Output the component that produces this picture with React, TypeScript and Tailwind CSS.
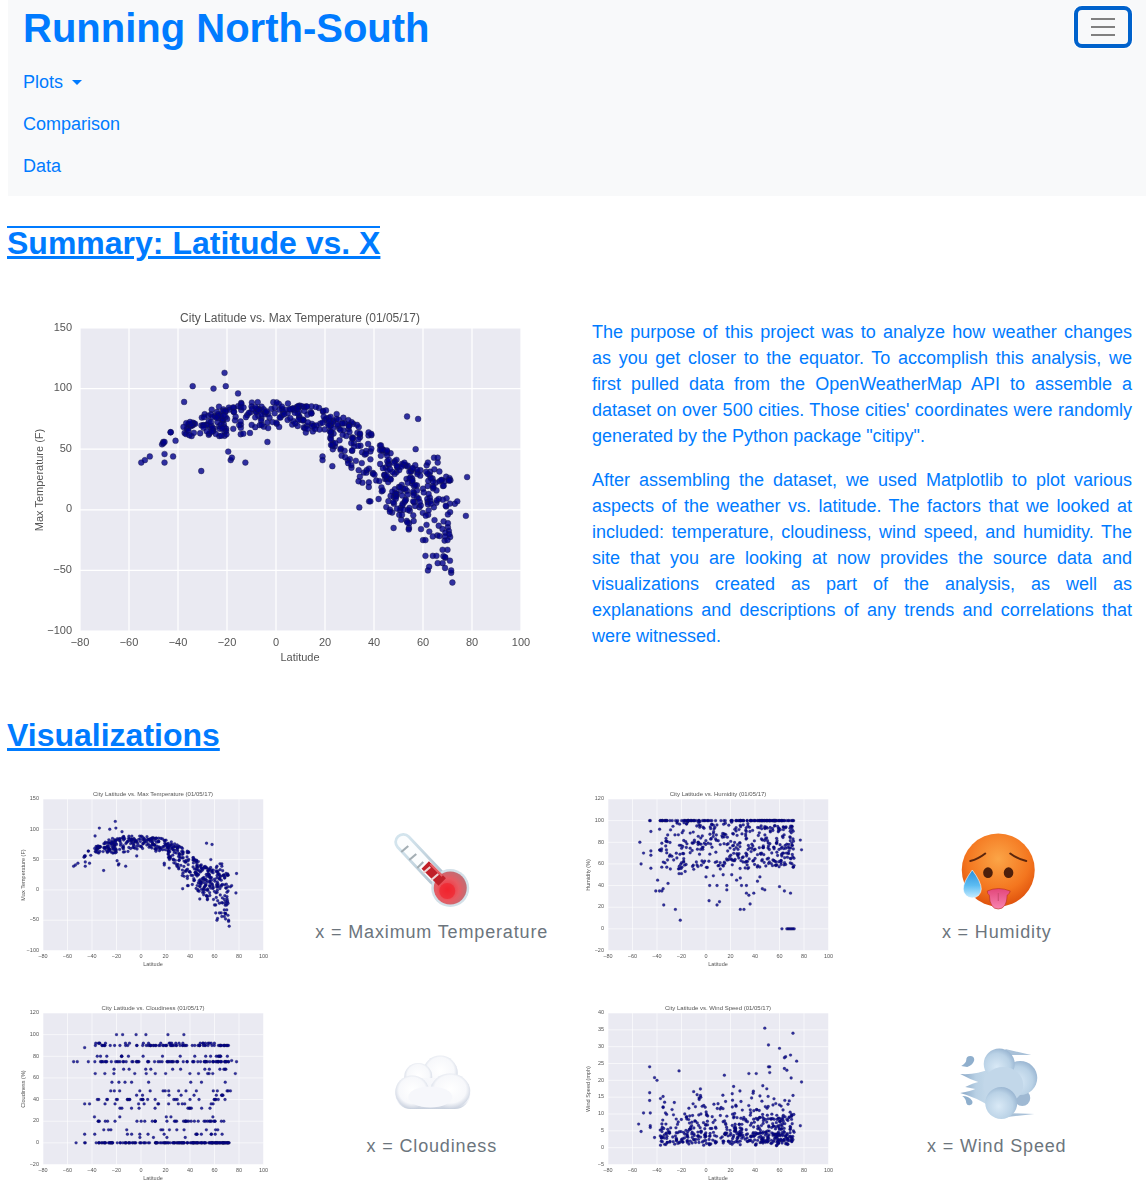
import React from "react";

type Pt = [number, number];

// small seeded rng so the scatter stays the same on each render
function rng(seed: number) {
  let a = seed;
  return () => {
    a |= 0;
    a = (a + 0x6d2b79f5) | 0;
    let t = Math.imul(a ^ (a >>> 15), 1 | a);
    t = (t + Math.imul(t ^ (t >>> 7), 61 | t)) ^ t;
    return ((t ^ (t >>> 14)) >>> 0) / 4294967296;
  };
}

function lerp(table: Pt[], x: number) {
  for (let i = 0; i < table.length - 1; i++) {
    if (x <= table[i + 1][0]) {
      const f = (x - table[i][0]) / (table[i + 1][0] - table[i][0]);
      return table[i][1] + f * (table[i + 1][1] - table[i][1]);
    }
  }
  return table[table.length - 1][1];
}

function lats(r: () => number) {
  const out: number[] = [];
  const spans: [number, number, number][] = [
    [-38, -10, 105],
    [-10, 20, 110],
    [20, 45, 125],
    [45, 72, 185],
  ];
  spans.forEach(([a, b, n]) => {
    for (let i = 0; i < n; i++) out.push(a + r() * (b - a));
  });
  return out;
}

function tempData(): Pt[] {
  const r = rng(11);
  const lo: Pt[] = [[-40, 55], [-25, 60], [-10, 62], [5, 68], [20, 58], [30, 30], [40, 12], [50, -12], [60, -28], [72, -48]];
  const hi: Pt[] = [[-40, 70], [-25, 85], [-10, 90], [5, 88], [20, 84], [30, 74], [40, 62], [50, 40], [60, 38], [72, 28]];
  const pts: Pt[] = lats(r).map((la) => {
    const t = Math.pow(r(), 0.72);
    const a = lerp(lo, la);
    return [la, a + (lerp(hi, la) - a) * t];
  });
  const extra: Pt[] = [[-55, 39], [-53.5, 41], [-51.5, 44], [-46.5, 54], [-46, 56], [-46, 55], [-45.5, 56], [-45.5, 46], [-45.5, 39], [-43, 64], [-43, 64], [-42, 44], [-41, 57], [-37.5, 89], [-34, 102], [-30.5, 32], [-25.5, 100], [-21, 113], [-20.5, 102], [-19.5, 48], [-18.5, 41], [-18, 43], [-15.5, 96], [-12.5, 39], [-3.5, 56], [19, 44], [19, 41], [23, 36], [34, 2], [38, 7], [38.5, 7], [48, -15], [53.5, 77], [58, 75], [57, 50], [77.5, -5], [78, 27], [73, 5], [74, 7], [72, -60], [71.5, -52], [71.5, -50], [70, -33], [68, -33], [62, -50], [62.5, -47], [61, -38], [64, -38], [65.5, -38], [66, -44], [68, -44], [69, -48], [69, -39], [71, -42], [62, 39], [64.5, 43], [66, 43], [66, 39], [70, -25], [69, -22], [64, -22], [60, -25], [61, -25]];
  return pts.concat(extra);
}

function humidData(): Pt[] {
  const r = rng(23);
  const pts: Pt[] = [];
  lats(r).forEach((la) => {
    const v = r();
    if (v < 0.24) pts.push([la, 100]);
    else if (la > 40) pts.push([la, 96 - r() * 40]);
    else pts.push([la, 99 - r() * 44]);
  });
  const extra: Pt[] = [[-54, 80], [-53, 60], [-51, 70], [-46, 100], [-45.5, 100], [-45, 90], [-45, 56], [-45, 68], [-45, 72], [-39.5, 45], [-41, 35], [-38, 35], [-36, 35], [-35, 37], [-34.5, 22], [-31, 42], [-25, 18], [-21, 8], [-22, 51], [-20, 51], [-17, 53], [-10, 55], [0, 48], [3, 40], [2.5, 26], [6, 49], [9, 40], [9, 22], [11, 25], [14, 50], [17, 40], [17, 36], [21, 50], [25, 45], [28, 47], [28, 18], [31, 18], [29, 40], [33, 40], [33, 33], [35, 31], [36, 23], [39, 33], [42, 44], [44, 48], [46, 37], [48, 36], [60, 39], [64, 35], [69, 33], [62, 0], [66, 0], [67, 0], [68, 0], [69, 0], [70, 0], [71, 0], [72, 0], [78, 73], [77, 82]];
  return pts.concat(extra);
}

function cloudData(): Pt[] {
  const r = rng(37);
  const levels: [number, number][] = [[0, 0.3], [5, 0.012], [8, 0.03], [12, 0.02], [20, 0.055], [24, 0.015], [32, 0.025], [36, 0.025], [40, 0.05], [44, 0.015], [48, 0.03], [56, 0.025], [64, 0.025], [68, 0.02], [75, 0.14], [80, 0.03], [90, 0.16], [92, 0.03]];
  const pts: Pt[] = [];
  lats(r).forEach((la) => {
    let v = r();
    let lv = 0;
    for (const [l, w] of levels) {
      if (v < w) {
        lv = l;
        break;
      }
      v -= w;
    }
    pts.push([la, lv]);
  });
  const extra: Pt[] = [[-20, 100], [-15, 100], [-4, 100], [4, 100], [22, 100], [35, 100], [-53, 0], [-46, 0], [-45.5, 0], [-46, 8], [-46, 36], [-46, 88], [-55, 75], [-52, 75], [-43, 75], [-42, 36], [-38, 24], [78, 75], [77, 64], [73, 48], [74, 76], [-34, 92], [-29, 92]];
  return pts.concat(extra);
}

function windData(): Pt[] {
  const r = rng(53);
  const pts: Pt[] = lats(r).map((la) => {
    const e = -Math.log(1 - r() * 0.97) * 4.8;
    return [la, Math.min(0.5 + e + r() * 1.5, 19)];
  });
  const extra: Pt[] = [[48, 35.5], [71, 34], [51, 30.5], [60, 29.5], [69, 27.5], [65, 27], [64, 26.7], [74, 25.7], [-46, 24], [51, 24], [52, 24], [52, 22.3], [64, 23.5], [66, 23], [-22, 22.8], [35, 22], [41, 22], [15, 21.5], [-42, 20.8], [-40, 20], [69.5, 20.7], [78, 19.5], [77, 6.5], [-55, 7], [-53, 4.8], [-51, 10.3], [-45.5, 10.3], [-46, 16.3], [-46, 14], [-45.5, 6.5], [-45.5, 6], [-42, 3]];
  return pts.concat(extra);
}

const temp = tempData();
const humid = humidData();
const cloud = cloudData();
const wind = windData();

const xTicks = [-80, -60, -40, -20, 0, 20, 40, 60, 80, 100];

type ChartProps = {
  title: string;
  yLabel: string;
  yMin: number;
  yMax: number;
  yStep: number;
  data: Pt[];
  small?: boolean;
};

function fmt(n: number) {
  return n < 0 ? "\u2212" + Math.abs(n) : String(n);
}

function Chart({ title, yLabel, yMin, yMax, yStep, data, small }: ChartProps) {
  const L = 60;
  const R = 501;
  const T = 28;
  const B = 331;
  const px = (v: number) => L + ((v + 80) / 180) * (R - L);
  const py = (v: number) => B - ((v - yMin) / (yMax - yMin)) * (B - T);
  const yTicks: number[] = [];
  for (let v = yMin; v <= yMax; v += yStep) yTicks.push(v);

  return (
    <svg
      viewBox="0 0 520 370"
      className={small ? "block w-[260px] h-[185px] blur-[0.6px]" : "block w-[520px] h-[370px] blur-[0.4px]"}
    >
      <rect x={L} y={T} width={R - L} height={B - T} fill="#eaeaf2" />
      {xTicks.map((t) => (
        <line key={t} x1={px(t)} x2={px(t)} y1={T} y2={B} stroke="#fff" strokeWidth={1.2} />
      ))}
      {yTicks.map((t) => (
        <line key={t} x1={L} x2={R} y1={py(t)} y2={py(t)} stroke="#fff" strokeWidth={1.2} />
      ))}
      {data.map(([x, y], i) => (
        <circle key={i} cx={px(x)} cy={py(y)} r={2.9} fill="#00008b" fillOpacity={0.8} stroke="#1a1a40" strokeWidth={0.4} />
      ))}
      <g fill="#555555" fontSize={11} fontFamily="'Liberation Sans', sans-serif">
        {xTicks.map((t) => (
          <text key={t} x={px(t)} y={346} textAnchor="middle">
            {fmt(t)}
          </text>
        ))}
        {yTicks.map((t) => (
          <text key={t} x={52} y={py(t) + 2.5} textAnchor="end">
            {fmt(t)}
          </text>
        ))}
        <text x={280} y={361} textAnchor="middle">
          Latitude
        </text>
        <text transform="translate(23,180) rotate(-90)" textAnchor="middle">
          {yLabel}
        </text>
        <text x={280} y={22} textAnchor="middle" fontSize={12}>
          {title}
        </text>
      </g>
    </svg>
  );
}

function Thermometer() {
  return (
    <svg viewBox="1.75 0 120 96" className="block w-[120px] h-[96px] blur-[0.4px]">
      <defs>
        <radialGradient id="bulb" cx="0.42" cy="0.55" r="0.62">
          <stop offset="0" stopColor="#f02a34" />
          <stop offset="0.55" stopColor="#e85a62" />
          <stop offset="1" stopColor="#bb6f76" />
        </radialGradient>
        <linearGradient id="glass" x1="0" y1="0" x2="1" y2="1">
          <stop offset="0" stopColor="#d3e4ed" />
          <stop offset="1" stopColor="#b4c6d2" />
        </linearGradient>
      </defs>
      <line x1="33" y1="22" x2="66" y2="57" stroke="url(#glass)" strokeWidth="18" strokeLinecap="round" />
      <line x1="33" y1="22" x2="66" y2="57" stroke="#fbfdfe" strokeWidth="12.5" strokeLinecap="round" />
      <circle cx="80" cy="68" r="19" fill="#d3e0e8" />
      <circle cx="80" cy="68" r="16.5" fill="url(#bulb)" />
      <circle cx="77" cy="71" r="8" fill="#f2202a" opacity="0.6" />
      <line x1="55" y1="45" x2="72" y2="62" stroke="#c02028" strokeWidth="10.5" />
      <line x1="60" y1="44" x2="72" y2="56" stroke="#e66066" strokeWidth="2" />
      <g stroke="#a3aeb4" strokeWidth="2.2">
        <line x1="31" y1="32" x2="38" y2="26" />
        <line x1="39" y1="40" x2="46" y2="34" />
        <line x1="47" y1="48" x2="53" y2="42" />
        <line x1="53" y1="53" x2="60" y2="47" stroke="#eed3d3" />
        <line x1="61" y1="60" x2="68" y2="54" stroke="#eed3d3" />
      </g>
    </svg>
  );
}

function HotFace() {
  return (
    <svg viewBox="1.75 0 110 96" className="block w-[110px] h-[96px] blur-[0.3px]">
      <defs>
        <radialGradient id="face" cx="0.5" cy="0.35" r="0.72">
          <stop offset="0" stopColor="#fba547" />
          <stop offset="0.6" stopColor="#f4761f" />
          <stop offset="1" stopColor="#d84606" />
        </radialGradient>
        <linearGradient id="drop" x1="0" y1="0" x2="0" y2="1">
          <stop offset="0" stopColor="#2a8fdc" />
          <stop offset="0.55" stopColor="#5cbcf2" />
          <stop offset="1" stopColor="#c8ecff" />
        </linearGradient>
        <linearGradient id="tongue" x1="0" y1="0" x2="0" y2="1">
          <stop offset="0" stopColor="#e2467a" />
          <stop offset="1" stopColor="#f884b0" />
        </linearGradient>
      </defs>
      <circle cx="58" cy="50" r="36.5" fill="url(#face)" />
      <path d="M30 41 Q38 39 45 33.5" fill="none" stroke="#5b260d" strokeWidth="2" strokeLinecap="round" />
      <path d="M70 33.5 Q77 39 86 41" fill="none" stroke="#5b260d" strokeWidth="2" strokeLinecap="round" />
      <ellipse cx="47.7" cy="52.7" rx="4.8" ry="5.4" fill="#4d1f0b" />
      <ellipse cx="68.3" cy="52.7" rx="4.8" ry="5.4" fill="#4d1f0b" />
      <path d="M47 71 Q58 66 70 71 Q69.5 74 67 75 Q66.5 89 58 89 Q49.5 89 49 75 Q47 74 47 71Z" fill="url(#tongue)" stroke="#b92e1a" strokeWidth="0.6" />
      <path d="M58 73 L58 81" stroke="#c9486f" strokeWidth="1" />
      <path d="M32 50 Q23 62 23 69 A9 9 0 0 0 41 69 Q41 62 32 50Z" fill="url(#drop)" stroke="#ffffff" strokeWidth="0.6" />
    </svg>
  );
}

function Cloud() {
  return (
    <svg viewBox="-3.25 -6 110 96" className="block w-[110px] h-[96px] blur-[0.4px]">
      <defs>
        <radialGradient id="puff" cx="0.5" cy="0.45" r="0.55">
          <stop offset="0" stopColor="#ffffff" />
          <stop offset="0.72" stopColor="#f7f8fb" />
          <stop offset="1" stopColor="#cdd4e1" />
        </radialGradient>
        <linearGradient id="puffBase" x1="0" y1="0" x2="0" y2="1">
          <stop offset="0" stopColor="#f7f8fb" />
          <stop offset="0.75" stopColor="#f1f3f8" />
          <stop offset="1" stopColor="#c6cedc" />
        </linearGradient>
      </defs>
      <circle cx="60" cy="33" r="17.5" fill="url(#puff)" />
      <circle cx="38" cy="37" r="14" fill="url(#puff)" />
      <rect x="15" y="38" width="75" height="31" rx="15.5" fill="url(#puffBase)" />
      <ellipse cx="32" cy="52" rx="17" ry="16.5" fill="url(#puff)" />
      <ellipse cx="70" cy="51" rx="20" ry="17.5" fill="url(#puff)" />
      <ellipse cx="50" cy="57" rx="22" ry="10.5" fill="#f6f7fb" />
    </svg>
  );
}

function WindFace() {
  return (
    <svg viewBox="-3.25 -1 110 96" className="block w-[110px] h-[96px] blur-[0.5px]">
      <defs>
        <radialGradient id="gust" cx="0.42" cy="0.6" r="0.62">
          <stop offset="0" stopColor="#d9e9f6" />
          <stop offset="0.7" stopColor="#bad2e6" />
          <stop offset="1" stopColor="#9ab6d2" />
        </radialGradient>
        <linearGradient id="streak" x1="0" y1="0" x2="1" y2="0">
          <stop offset="0" stopColor="#86a4c4" />
          <stop offset="0.5" stopColor="#b8d0e4" />
          <stop offset="1" stopColor="#c7dbeb" />
        </linearGradient>
      </defs>
      <path d="M15 39 Q32 40 44 34 L46 72 Q30 62 15 58 Q26 56 30 54 L20 52 Q28 48 33 47 Q24 44 15 39Z" fill="url(#streak)" />
      <path d="M60 14 L86 20 L62 20Z M60 78 L89 79 L62 82Z" fill="#a9c1d8" />
      <circle cx="77" cy="63" r="8" fill="#9fb9d3" />
      <circle cx="75" cy="43" r="17" fill="url(#gust)" />
      <circle cx="54" cy="29" r="15.5" fill="url(#gust)" />
      <ellipse cx="58" cy="50" rx="20" ry="18" fill="#c2d7e9" />
      <circle cx="56" cy="68" r="16" fill="url(#gust)" />
      <path d="M22 32 Q28 30 29 25 A4 4 0 1 0 21 25 Q21 28 16 31Z" fill="#8fafcd" />
      <path d="M17 61 Q24 61 27 66 A3 3 0 1 1 21 68 Q21 64 17 61Z" fill="#8fafcd" />
    </svg>
  );
}

function Caption({ children }: { children: string }) {
  return <p className="mt-[3px] text-[18px] leading-[27px] tracking-[0.85px] text-[#6c757d]">{children}</p>;
}

function ChartCell(props: ChartProps) {
  return (
    <div className="pt-[5px] pl-[5px]">
      <Chart {...props} small />
    </div>
  );
}

function EmojiCell({ icon, label }: { icon: React.ReactNode; label: string }) {
  return (
    <div className="flex flex-col items-center pt-[40px]">
      {icon}
      <Caption>{label}</Caption>
    </div>
  );
}

export default function App() {
  return (
    <div className="min-h-[1190px] w-[1146px] overflow-hidden bg-white text-[#007bff] [font-family:'Liberation_Sans',Arial,sans-serif]">
      <nav className="ml-2 h-[196px] bg-[#f8f9fa] pl-[15px]">
        <div className="flex h-[56px] items-start justify-between">
          <a className="text-[40px] font-bold leading-[56px]">Running North-South</a>
          <button className="mr-[14px] mt-[6px] flex h-[42px] w-[58px] flex-col items-center justify-center gap-[6px] rounded-lg border-4 border-[#0062cc] shadow-[0_0_0_1px_#fff]">
            <span className="block h-[2px] w-[24px] bg-[#808080]" />
            <span className="block h-[2px] w-[24px] bg-[#808080]" />
            <span className="block h-[2px] w-[24px] bg-[#808080]" />
          </button>
        </div>
        <ul className="mt-[5px] text-[18px]">
          <li className="flex h-[42px] items-center gap-[9px]">
            Plots
            <span className="mt-[1px] h-0 w-0 border-l-[5px] border-r-[5px] border-t-[5px] border-l-transparent border-r-transparent border-t-[#007bff]" />
          </li>
          <li className="flex h-[42px] items-center">Comparison</li>
          <li className="flex h-[42px] items-center">Data</li>
        </ul>
      </nav>

      <h2 className="relative ml-[7px] mt-[28px] w-fit text-[32px] font-bold leading-[38px] underline before:absolute before:inset-x-0 before:top-[2px] before:h-[2px] before:bg-[#007bff]">
        Summary: Latitude vs. X
      </h2>

      <div className="ml-2 mt-[38px] grid w-[1130px] grid-cols-2">
        <div className="pl-[12px]">
          <Chart title="City Latitude vs. Max Temperature (01/05/17)" yLabel="Max Temperature (F)" yMin={-100} yMax={150} yStep={50} data={temp} />
        </div>
        <div className="pl-[19px] pr-[6px] pt-[19px] text-justify text-[18px] leading-[26px]">
          <p>
            The purpose of this project was to analyze how weather changes as you get closer to the equator. To accomplish this analysis, we first pulled data from the OpenWeatherMap API to assemble a dataset on over 500 cities. Those cities' coordinates were randomly generated by the Python package "citipy".
          </p>
          <p className="mt-[18px]">
            After assembling the dataset, we used Matplotlib to plot various aspects of the weather vs. latitude. The factors that we looked at included: temperature, cloudiness, wind speed, and humidity. The site that you are looking at now provides the source data and visualizations created as part of the analysis, as well as explanations and descriptions of any trends and correlations that were witnessed.
          </p>
        </div>
      </div>

      <h2 className="ml-[7px] mt-[46px] w-fit text-[32px] font-bold leading-[38px] underline">Visualizations</h2>

      <div className="ml-2 mt-[26px] grid w-[1130px] grid-cols-4 gap-y-[24px] pb-[6px]">
        <ChartCell title="City Latitude vs. Max Temperature (01/05/17)" yLabel="Max Temperature (F)" yMin={-100} yMax={150} yStep={50} data={temp} />
        <EmojiCell icon={<Thermometer />} label="x = Maximum Temperature" />
        <ChartCell title="City Latitude vs. Humidity (01/05/17)" yLabel="Humidity (%)" yMin={-20} yMax={120} yStep={20} data={humid} />
        <EmojiCell icon={<HotFace />} label="x = Humidity" />
        <ChartCell title="City Latitude vs. Cloudiness (01/05/17)" yLabel="Cloudiness (%)" yMin={-20} yMax={120} yStep={20} data={cloud} />
        <EmojiCell icon={<Cloud />} label="x = Cloudiness" />
        <ChartCell title="City Latitude vs. Wind Speed (01/05/17)" yLabel="Wind Speed (mph)" yMin={-5} yMax={40} yStep={5} data={wind} />
        <EmojiCell icon={<WindFace />} label="x = Wind Speed" />
      </div>
    </div>
  );
}
